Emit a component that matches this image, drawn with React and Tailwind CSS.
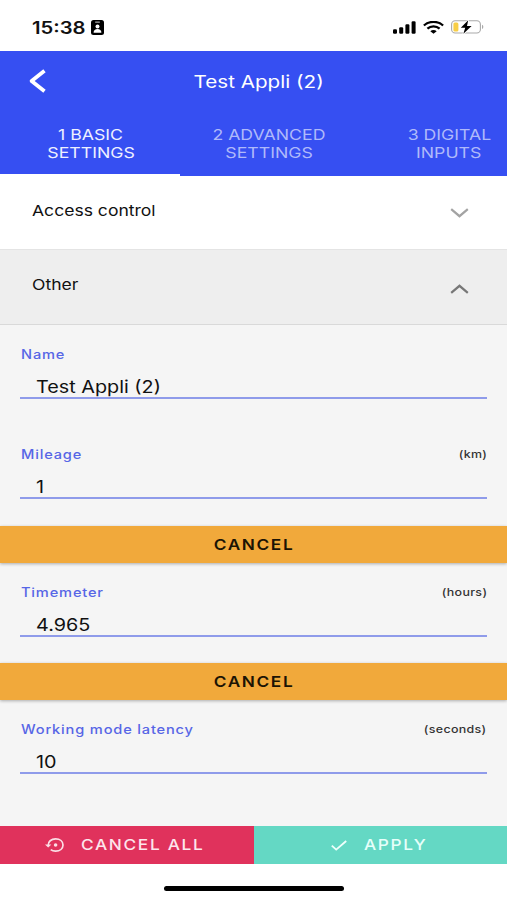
// src/App.jsx
import clsx from 'clsx';

const tabs = [
	{ lines: ['1 BASIC', 'SETTINGS'], active: true },
	{ lines: ['2 ADVANCED', 'SETTINGS'] },
	{ lines: ['3 DIGITAL', 'INPUTS'] },
];

function StatusBar() {
	return (
		<div className="flex h-[51px] shrink-0 items-start justify-between bg-white pt-[17px] pr-[23px] pl-8">
			<div className="flex h-5 items-center">
				<span className="mt-px w-[59px] origin-left scale-x-[1.19] text-[17px] leading-5 font-semibold">15:38</span>
				<svg width="13" height="15" viewBox="0 0 13 15">
					<rect width="13" height="15" rx="2.5" fill="#000" />
					<rect x="4" y="1.5" width="5" height="1.2" rx="0.6" fill="#aaa" />
					<circle cx="6.5" cy="6.6" r="2" fill="#fff" />
					<path d="M2.6 12.8c0-2.6 1.6-3.7 3.9-3.7s3.9 1.1 3.9 3.7z" fill="#fff" />
				</svg>
			</div>
			<div className="flex h-5 items-center">
				<svg width="23" height="13" viewBox="0 0 23 13">
					<rect x="0" y="8.3" width="4" height="4.4" rx="1.2" />
					<rect x="6.2" y="6.2" width="4" height="6.5" rx="1.2" />
					<rect x="12.4" y="3.3" width="4" height="9.4" rx="1.2" />
					<rect x="18.6" y="0.3" width="4" height="12.4" rx="1.2" />
				</svg>
				<svg className="ml-[7px]" width="21" height="13" viewBox="0 0 21 13" fill="none" stroke="#000" strokeWidth="2.3">
					<path d="M0.9 4.5C6.2-0.3 14.8-0.3 20.1 4.5" />
					<path d="M4.4 7.7c3.4-3 8.8-3 12.2 0" />
					<path d="M7.3 10.2c1.8-1.6 4.6-1.6 6.4 0L10.5 12.8z" fill="#000" stroke="none" />
				</svg>
				<svg className="ml-[7px]" width="33" height="14" viewBox="0 0 33 14">
					<rect x="0.6" y="0.8" width="28.8" height="12.2" rx="3.6" fill="#fff" stroke="#a9a9a9" strokeWidth="1.1" />
					<path d="M31 4.8c1.8.6 1.8 3.6 0 4.2z" fill="#a9a9a9" />
					<rect x="2.4" y="2.4" width="5" height="9" rx="1.5" fill="#f8ce46" />
					<path d="M17.2 0.3L9.8 7.7h4.4L12.4 13.7 20.6 5.9h-4.6z" stroke="#fff" strokeWidth="1.6" paintOrder="stroke" />
				</svg>
			</div>
		</div>
	);
}

function Header() {
	return (
		<header className="shrink-0 bg-[#364ff2] text-white">
			<div className="grid h-[60px] grid-cols-[64px_1fr_54px] items-center">
				<svg className="ml-7" width="20" height="24" viewBox="0 0 20 24" fill="none" stroke="#fff" strokeWidth="3.8" strokeLinejoin="round">
					<path d="M16.5 1.8L3.6 12l12.9 10.2" />
				</svg>
				<h1 className="mt-px justify-self-center text-[17px] leading-5 whitespace-nowrap">
					<span className="inline-block scale-x-[1.215]">Test Appli (2)</span>
				</h1>
			</div>
			<nav className="flex h-[65px] overflow-hidden">
				{tabs.map((tab) => (
					<div
						key={tab.lines[0]}
						className={clsx(
							'flex w-[180px] shrink-0 flex-col items-center border-b-2 pt-[15px] text-[15px] leading-[18px]',
							tab.active ? 'border-white pl-[2px] text-[#eef0ff]' : 'border-transparent pr-[2px] text-[#afb9fa]',
						)}
					>
						{tab.lines.map((line) => (
							<span key={line} className="scale-x-[1.18] whitespace-nowrap">{line}</span>
						))}
					</div>
				))}
			</nav>
		</header>
	);
}

function SectionRow({ title, open }) {
	return (
		<div
			className={clsx(
				'flex shrink-0 justify-between border-b pt-[25px] pr-[38px] pl-8',
				open ? 'h-[75px] border-[#d9d9d9] bg-[#eeeeee]' : 'h-[74px] border-[#e4e4e4] bg-white',
			)}
		>
			<span className="origin-left scale-x-[1.17] self-start text-[15px] leading-5">{title}</span>
			<svg
				className={open ? 'mt-[9px]' : 'mt-[7px]'}
				width="19"
				height="10"
				viewBox="0 0 19 10"
				fill="none"
				stroke={open ? '#777' : '#a3a3a3'}
				strokeWidth="2.2"
			>
				<path d={open ? 'M1.2 8.8L9.5 1.8l8.3 7' : 'M1.2 1.2L9.5 8.2l8.3-7'} />
			</svg>
		</div>
	);
}

function Field({ label, unit, value, tall }) {
	return (
		<div className={clsx('shrink-0 px-5 pt-[21px]', tall ? 'h-[101px]' : 'h-[100px]')}>
			<div className="flex h-4 items-center justify-between">
				<span className="mt-[2px] ml-px origin-left scale-x-[1.17] text-[12.5px] leading-4 font-medium tracking-[0.7px] text-[#5766e6]">{label}</span>
				{unit && <span className="origin-right scale-x-[1.13] text-[11px] leading-4 font-medium tracking-[0.3px] text-[#333]">{unit}</span>}
			</div>
			<div className="mt-[13px] flex h-[24px] items-center border-b-2 border-[#8f9bea] pl-4">
				<span className="mt-px origin-left scale-x-[1.165] text-[17px] leading-5 text-[#111]">{value}</span>
			</div>
		</div>
	);
}

function CancelButton() {
	return (
		<button className="flex h-[37px] w-full shrink-0 items-center justify-center bg-[#f1a93b] shadow-[0_1px_3px_rgba(0,0,0,0.3)]">
			<span className="ml-px scale-x-[1.15] text-[15px] leading-5 font-semibold tracking-[1.4px] text-[#1c1404]">CANCEL</span>
		</button>
	);
}

function Footer() {
	return (
		<footer className="shrink-0 bg-white">
			<div className="flex h-[38px] text-white">
				<button className="flex w-[254px] items-center bg-[#e0325c] pl-[45px]">
					<svg width="19" height="14" viewBox="0 0 19 14" fill="none" stroke="#fbdfe6" strokeWidth="1.7">
						<path d="M3.2 7.4C3 3.7 6.2.9 10.6.9s7.4 2.6 7.4 6.1-3 6.1-7.4 6.1c-2 0-3.6-.5-4.9-1.5" />
						<path d="M0 6.4h6.4L3.2 9.6z" fill="#fbdfe6" stroke="none" />
						<circle cx="10.6" cy="7" r="1.8" fill="#fbdfe6" stroke="none" />
					</svg>
					<span className="ml-[17px] origin-left scale-x-[1.15] text-[15px] leading-5 font-medium tracking-[1.45px] whitespace-nowrap text-[#fde6ec]">CANCEL ALL</span>
				</button>
				<button className="flex flex-1 items-center bg-[#64d8c4] pl-[77px]">
					<svg width="16" height="11" viewBox="0 0 16 11" fill="none" stroke="#eefffb" strokeWidth="1.9">
						<path d="M0.8 5.6l4.4 4L15.2 1" />
					</svg>
					<span className="ml-[17px] origin-left scale-x-[1.15] text-[15px] leading-5 font-medium tracking-[1.4px] text-[#e6fffa]">APPLY</span>
				</button>
			</div>
			<div className="flex h-9 justify-center pt-[22px] pl-px">
				<div className="h-[5px] w-[180px] rounded-full bg-black" />
			</div>
		</footer>
	);
}

export default function App() {
	return (
		<div className="flex h-[900px] w-[507px] flex-col overflow-hidden bg-[#f5f5f5] font-['Inter',sans-serif] text-[#111]">
			<StatusBar />
			<Header />
			<SectionRow title="Access control" />
			<SectionRow title="Other" open />
			<main className="flex flex-1 flex-col">
				<Field label="Name" value="Test Appli (2)" />
				<Field label="Mileage" unit="(km)" value="1" tall />
				<CancelButton />
				<Field label="Timemeter" unit="(hours)" value="4.965" />
				<CancelButton />
				<Field label="Working mode latency" unit="(seconds)" value="10" />
			</main>
			<Footer />
		</div>
	);
}
